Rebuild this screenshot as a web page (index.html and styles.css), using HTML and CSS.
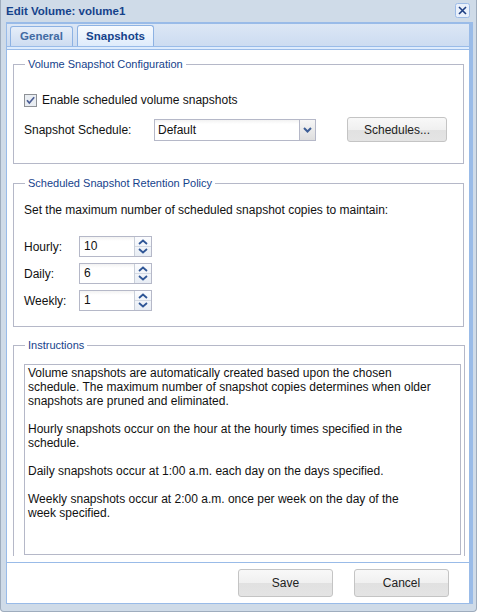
FILE: index.html
```html
<!DOCTYPE html>
<html lang="en">
<head>
  <meta charset="UTF-8" />
  <title>Edit Volume: volume1</title>
  <link rel="stylesheet" href="styles.css">
</head>
<body>

<div class="win">
  <!-- title bar -->
  <div class="win-head">
    <span class="win-title">Edit Volume: volume1</span>
    <span class="win-close">
      <svg width="15" height="15" viewBox="0 0 15 15">
        <rect x="0.5" y="0.5" width="14" height="14" rx="2" fill="#e9f0fb" stroke="#9dbbe6"/>
        <path d="M4 4l7 7M11 4l-7 7" stroke="#1f3f83" stroke-width="1.6"/>
      </svg>
    </span>
  </div>

  <div class="win-frame">
    <!-- tabs -->
    <div class="tab-strip">
      <span class="tab">General</span>
      <span class="tab active">Snapshots</span>
    </div>
    <div class="tab-spacer"></div>

    <div class="tab-body">
      <fieldset class="fs fs-config">
        <legend>Volume Snapshot Configuration</legend>
        <div class="row check-row">
          <span class="check">
            <svg width="13" height="13" viewBox="0 0 13 13">
              <rect x="0.5" y="0.5" width="12" height="12" fill="#e9edf2" stroke="#8e9196"/>
              <path d="M3 6.3l2.3 2.7L10.2 3.3" fill="none" stroke="#4b5d94" stroke-width="1.7"/>
            </svg>
          </span>
          <span>Enable scheduled volume snapshots</span>
        </div>
        <div class="row sched-row">
          <span class="lbl">Snapshot Schedule:</span>
          <div class="combo">
            <span class="combo-text">Default</span>
            <span class="combo-trig">
              <svg width="9" height="6" viewBox="0 0 9 6">
                <path d="M1 1l3.5 3.5L8 1" fill="none" stroke="#3d5e96" stroke-width="2"/>
              </svg>
            </span>
          </div>
          <button class="btn btn-sched">Schedules...</button>
        </div>
      </fieldset>

      <fieldset class="fs fs-retention">
        <legend>Scheduled Snapshot Retention Policy</legend>
        <div class="policy-text">Set the maximum number of scheduled snapshot copies to maintain:</div>
        <div class="spin-rows">
          <div class="row spin-row">
            <span class="lbl">Hourly:</span>
            <div class="spin"><span class="spin-val">10</span><span class="spin-trig"><svg width="16" height="19" viewBox="0 0 16 19"><path d="M4 7l4-3.5 4 3.5M4 12l4 3.5 4-3.5" fill="none" stroke="#2f5696" stroke-width="1.8"/><path d="M0 9.5h16" stroke="#d3d9e3"/></svg></span></div>
          </div>
          <div class="row spin-row">
            <span class="lbl">Daily:</span>
            <div class="spin"><span class="spin-val">6</span><span class="spin-trig"><svg width="16" height="19" viewBox="0 0 16 19"><path d="M4 7l4-3.5 4 3.5M4 12l4 3.5 4-3.5" fill="none" stroke="#2f5696" stroke-width="1.8"/><path d="M0 9.5h16" stroke="#d3d9e3"/></svg></span></div>
          </div>
          <div class="row spin-row">
            <span class="lbl">Weekly:</span>
            <div class="spin"><span class="spin-val">1</span><span class="spin-trig"><svg width="16" height="19" viewBox="0 0 16 19"><path d="M4 7l4-3.5 4 3.5M4 12l4 3.5 4-3.5" fill="none" stroke="#2f5696" stroke-width="1.8"/><path d="M0 9.5h16" stroke="#d3d9e3"/></svg></span></div>
          </div>
        </div>
      </fieldset>

      <fieldset class="fs fs-instr">
        <legend>Instructions</legend>
        <textarea class="instr" readonly>Volume snapshots are automatically created based upon the chosen
schedule. The maximum number of snapshot copies determines when older
snapshots are pruned and eliminated.

Hourly snapshots occur on the hour at the hourly times specified in the
schedule.

Daily snapshots occur at 1:00 a.m. each day on the days specified.

Weekly snapshots occur at 2:00 a.m. once per week on the day of the
week specified.</textarea>
      </fieldset>
    </div>

    <!-- buttons -->
    <div class="win-foot">
      <button class="btn btn-foot">Save</button>
      <button class="btn btn-foot">Cancel</button>
    </div>
  </div>
</div>

</body>
</html>
```

FILE: styles.css
```css
* { box-sizing: border-box; }
body {
  margin: 0;
  background: #fff;
  font-family: "Liberation Sans", Arial, sans-serif;
  font-size: 12px;
  color: #111;
}

.win {
  width: 477px;
  height: 612px;
  background: #cfdbe8;
  border: 1px solid #9eacbd;
  border-top: 0;
  border-radius: 0 0 4px 4px;
  padding: 0 3px 7px 5px;
  display: flex;
  flex-direction: column;
}

.win-head {
  height: 22px;
  display: flex;
  justify-content: space-between;
  align-items: flex-start;
  padding-right: 3px;
}

.win-title {
  font-weight: bold;
  font-size: 11.5px;
  color: #15428b;
  line-height: 22px;
}

.win-close {
  margin-top: 3px;
  height: 15px;
}

.win-frame {
  flex: 1;
  display: flex;
  flex-direction: column;
  background: #fff;
  border: solid #99bbe8;
  border-width: 2px 4px 1px 1px;
}

/* tabs */
.tab-strip {
  height: 23px;
  display: flex;
  align-items: flex-end;
  gap: 4px;
  padding-left: 3px;
  background: linear-gradient(#dce7f5, #ccdcf1);
  border-bottom: 1px solid #99bbe8;
}

.tab {
  width: 63px;
  height: 20px;
  text-align: center;
  border: 1px solid #8db2e3;
  border-bottom: 0;
  border-radius: 3px 3px 0 0;
  font-weight: bold;
  font-size: 11.5px;
  line-height: 19px;
  color: #416aa3;
  background: linear-gradient(#e6eef9, #cddcf1);
}

.tab.active {
  width: 77px;
  height: 21px;
  line-height: 20px;
  color: #15428b;
  background: linear-gradient(#f7fafe, #deebfb);
}

.tab-spacer {
  height: 3px;
  background: #deecfd;
  border-bottom: 1px solid #99bbe8;
}

.tab-body {
  height: 513px;
  border-bottom: 1px solid #99bbe8;
  padding: 8px 5px 0 6px;
  overflow: hidden;
}

/* fieldsets */
.fs {
  border: 1px solid #b5b8c8;
  margin: 0;
  padding: 0 10px;
}

.fs legend {
  padding: 0 3px;
  margin-left: 1px;
  font-size: 11px;
  line-height: 13px;
  color: #15428b;
}

.fs-config { padding: 19px 10px 21px; }
.fs-retention { margin-top: 13px; padding: 13px 10px 15px; }
.fs-instr {
  margin-top: 12px;
  padding: 12px 3px 1px 10px;
  border-bottom: 0;
}

.row {
  display: flex;
  align-items: center;
}

.check-row { height: 20px; gap: 5px; }
.check { height: 13px; }

.sched-row { height: 25px; margin-top: 7px; }
.sched-row .lbl { width: 130px; }

.combo {
  width: 162px;
  height: 22px;
  display: flex;
  border: 1px solid #b5b8c8;
}

.combo-text {
  flex: 1;
  padding-left: 3px;
  line-height: 20px;
  background: linear-gradient(#f2f2f2, #fff 4px);
}

.combo-trig {
  width: 16px;
  border-left: 1px solid #b5b8c8;
  background: linear-gradient(#f6f6f6, #dedede);
  display: flex;
  align-items: center;
  justify-content: center;
}

.btn {
  font-family: "Liberation Sans", Arial, sans-serif;
  font-size: 12px;
  color: #222;
  border: 1px solid #c4c4c4;
  border-radius: 3px;
  background: linear-gradient(#f8f8f8 0, #f0f0f0 50%, #e1e1e1 50%, #e4e4e4 100%);
  padding: 0;
}

.btn-sched { width: 100px; height: 25px; margin-left: 31px; }

.policy-text { line-height: 14px; }

.spin-rows {
  margin-top: 19px;
  display: flex;
  flex-direction: column;
  gap: 6px;
}

.spin-row { height: 21px; }
.spin-row .lbl { width: 55px; }

.spin {
  width: 73px;
  height: 21px;
  display: flex;
  border: 1px solid #b5b8c8;
}

.spin-val {
  flex: 1;
  padding-left: 4px;
  line-height: 19px;
  background: linear-gradient(#f2f2f2, #fff 4px);
}

.spin-trig {
  width: 17px;
  border-left: 1px solid #c9cfd9;
  background: linear-gradient(#fbfcfe, #e8edf4);
  display: flex;
}

.instr {
  display: block;
  width: 437px;
  height: 191px;
  margin: 0;
  border: 1px solid #b5b8c8;
  padding: 1px 3px;
  font-family: "Liberation Sans", Arial, sans-serif;
  font-size: 12px;
  line-height: 14px;
  color: #111;
  white-space: pre;
  overflow: hidden;
  resize: none;
  background: #fff;
}

.win-foot {
  height: 40px;
  display: flex;
  justify-content: flex-end;
  align-items: flex-start;
  gap: 21px;
  padding: 6px 20px 0 0;
}

.btn-foot { width: 95px; height: 28px; }
```
